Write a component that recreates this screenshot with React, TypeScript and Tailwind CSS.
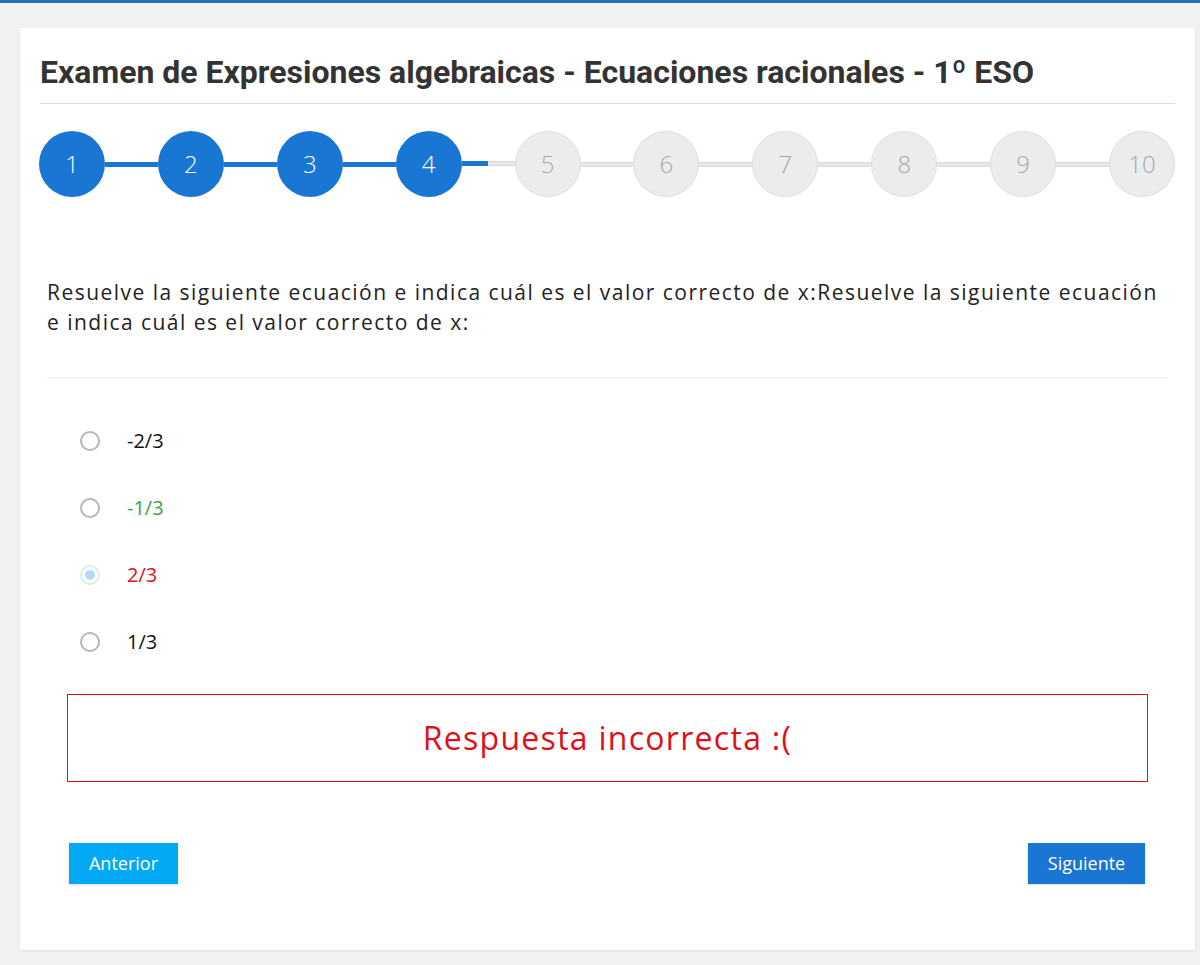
import React from "react";

const steps = [1, 2, 3, 4, 5, 6, 7, 8, 9, 10];
const current = 4;

const options = [
  { label: "-2/3", color: "text-[#111]", checked: false },
  { label: "-1/3", color: "text-[#43a047]", checked: false },
  { label: "2/3", color: "text-[#e0101a]", checked: true },
  { label: "1/3", color: "text-[#111]", checked: false },
];

function Radio({ checked }: { checked: boolean }) {
  if (checked) {
    return (
      <span className="w-[20px] h-[20px] shrink-0 rounded-full border-2 border-[#d6ecfb] bg-white flex items-center justify-center">
        <span className="w-[10px] h-[10px] rounded-full bg-[#b3dbf8]" />
      </span>
    );
  }
  return <span className="w-[20px] h-[20px] shrink-0 rounded-full border-2 border-[#b5b5b5] bg-white" />;
}

export default function App() {
  return (
    <div className="min-h-[965px] bg-[#f1f1f1] border-t-[3px] border-[#2a6fb8] pt-[25px] pl-[20px] pr-[5px] font-['Open_Sans',sans-serif]">
      <div className="bg-white w-[1175px] h-[922px] px-[20px] pt-[25px] shadow-[0_1px_2px_rgba(0,0,0,0.08)]">
        {/* Header */}
        <h1 className="font-['Roboto',sans-serif] font-bold text-[32px] leading-[38px] text-[#333] pb-[12px] border-b border-[#ddd] whitespace-nowrap">
          Examen de Expresiones algebraicas - Ecuaciones racionales - 1º ESO
        </h1>

        {/* Stepper */}
        <div className="flex items-center mt-[27px] -ml-[1px]">
          {steps.map((s, i) => {
            const done = s <= current;
            return (
              <React.Fragment key={s}>
                <div
                  className={
                    done
                      ? "w-[66px] h-[66px] shrink-0 rounded-full bg-[#1976d2] text-white flex items-center justify-center text-[24px] font-light"
                      : "w-[66px] h-[66px] shrink-0 rounded-full bg-[#ececec] border border-[#dedede] text-[#a8a8a8] flex items-center justify-center text-[24px] font-light"
                  }
                >
                  {s}
                </div>
                {i < steps.length - 1 &&
                  (s < current ? (
                    <div className="flex-1 h-[5px] bg-[#1976d2]" />
                  ) : s === current ? (
                    <div className="flex-1 flex h-[6px]">
                      <div className="w-1/2 h-[5px] bg-[#1976d2]" />
                      <div className="w-1/2 h-[5px] bg-[#e8e8e8] border-y border-[#dadada]" />
                    </div>
                  ) : (
                    <div className="flex-1 h-[5px] bg-[#e8e8e8] border-y border-[#dadada]" />
                  ))}
              </React.Fragment>
            );
          })}
        </div>

        {/* Question */}
        <div className="px-[7px] mt-[80px]">
          <p className="text-[21px] leading-[30px] tracking-[0.07em] text-[#222]">
            Resuelve la siguiente ecuación e indica cuál es el valor correcto de x:Resuelve la siguiente ecuación e indica cuál es el valor correcto de x:
          </p>
          <div className="border-b border-[#ececec] mt-[40px]" />

          <div className="flex flex-col mt-[53px] pl-[33px] gap-[47px]">
            {options.map((o) => (
              <div key={o.label} className="flex items-center h-[20px]">
                <Radio checked={o.checked} />
                <span className={`ml-[27px] text-[20px] ${o.color}`}>{o.label}</span>
              </div>
            ))}
          </div>
        </div>

        {/* Feedback */}
        <div className="mx-[27px] mt-[42px] h-[88px] border border-[#e0101a] flex items-center justify-center">
          <span className="text-[32px] text-[#e0101a] tracking-[0.04em]">Respuesta incorrecta :(</span>
        </div>

        {/* Navigation */}
        <div className="flex justify-between mt-[61px] px-[29px] pr-[30px]">
          <button className="w-[109px] h-[41px] bg-[#03a9f4] text-white text-[18px] shadow-[0_1px_2px_rgba(0,0,0,0.15)]">
            Anterior
          </button>
          <button className="w-[117px] h-[41px] bg-[#1976d2] text-white text-[18px] shadow-[0_1px_2px_rgba(0,0,0,0.15)]">
            Siguiente
          </button>
        </div>
      </div>
    </div>
  );
}
